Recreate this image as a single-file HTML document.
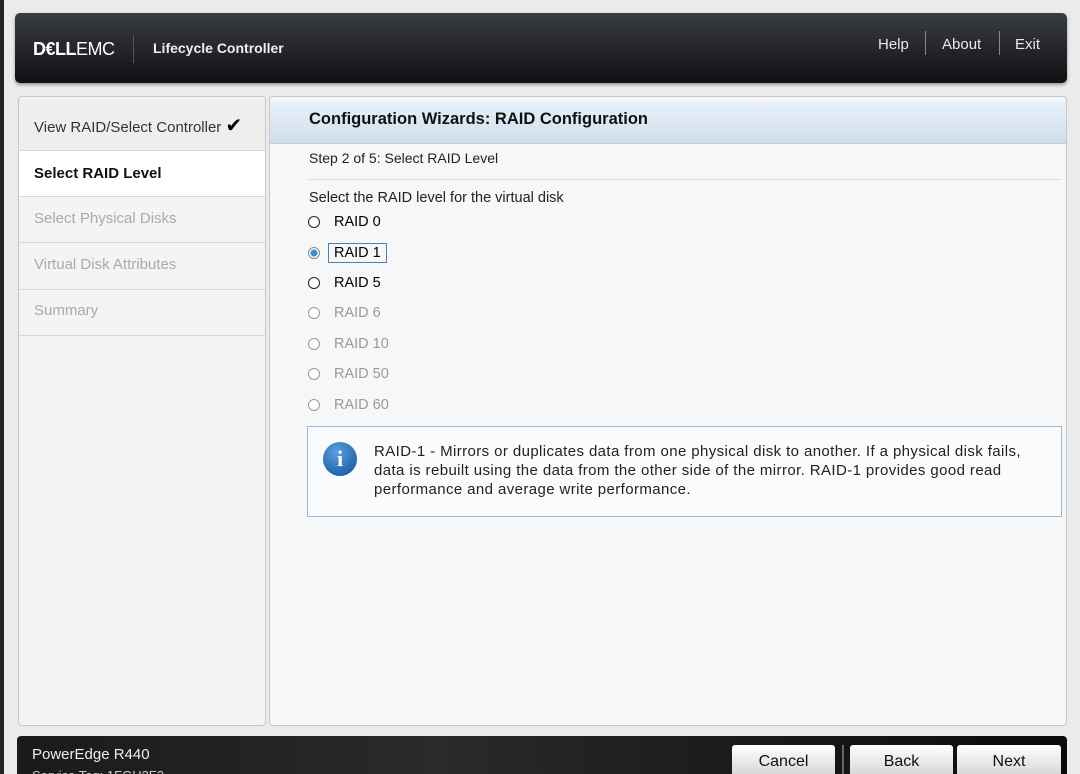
<!DOCTYPE html><html style="overflow:hidden"><head><style>
body{margin:0;width:1080px;height:774px;overflow:hidden;background:#ebebeb;font-family:"Liberation Sans",sans-serif;position:relative}
.a{position:absolute}
.hdr{left:15px;top:13px;width:1052px;height:70px;border-radius:5px;background:linear-gradient(#3a3d42,#0f1012);box-shadow:0 2px 3px #999}
.lp{left:18px;top:96px;width:246px;height:628px;background:#f4f4f4;border:1px solid #c8c8c8;border-radius:4px}
.rp{left:269px;top:96px;width:796px;height:628px;background:#f7f7f7;border:1px solid #c8c8c8;border-radius:4px;overflow:hidden}
.nav{position:absolute;left:0;width:246px;border-bottom:1px solid #d6d6d6;font-size:15px;box-sizing:border-box;padding-left:15px}
.r{position:absolute;left:36px;font-size:14.5px}
.c{position:absolute;left:38px;width:10px;height:10px;border:1px solid #222;border-radius:50%;background:#fff}
.g{color:#999}.g .c{border-color:#999}
.btn{top:745px;height:30px;background:linear-gradient(#fff,#d8d8d8);border-radius:3px 3px 0 0;font-size:16px;text-align:center;line-height:34px;color:#111}
</style></head><body>
<div class="a" style="left:0;top:0;width:4px;height:774px;background:#222"></div>
<div class="a hdr">
<div class="a" style="left:18px;top:26px;color:#fff;font-size:18px;letter-spacing:-0.5px"><b>D€LL</b>EMC</div>
<div class="a" style="left:118px;top:22px;width:1px;height:28px;background:#555"></div>
<div class="a" style="left:138px;top:27px;color:#eee;font-size:14px;font-weight:bold">Lifecycle Controller</div>
<div class="a" style="left:863px;top:23px;color:#e8e8e8;font-size:15px">Help</div>
<div class="a" style="left:910px;top:18px;width:1px;height:24px;background:#888"></div>
<div class="a" style="left:927px;top:23px;color:#e8e8e8;font-size:15px">About</div>
<div class="a" style="left:984px;top:18px;width:1px;height:24px;background:#888"></div>
<div class="a" style="left:1000px;top:23px;color:#e8e8e8;font-size:15px">Exit</div>
</div>
<div class="a lp">
<div class="nav" style="top:3px;height:51px;line-height:52px;background:#eee;color:#333">View RAID/Select Controller <span style="font-size:20px;color:#000">✔</span></div>
<div class="nav" style="top:54px;height:46px;line-height:46px;background:#fff;font-weight:bold;color:#111">Select RAID Level</div>
<div class="nav" style="top:100px;height:46px;line-height:44px;color:#aaa">Select Physical Disks</div>
<div class="nav" style="top:146px;height:47px;line-height:44px;color:#aaa">Virtual Disk Attributes</div>
<div class="nav" style="top:193px;height:46px;line-height:42px;color:#aaa">Summary</div>
</div>
<div class="a rp">
<div class="a" style="left:0;top:3px;width:796px;height:43px;background:linear-gradient(#eaf2fa,#cfdeec);border-bottom:1px solid #c0ccd8"></div>
<div class="a" style="left:39px;top:13px;font-size:16.5px;font-weight:bold;color:#111">Configuration Wizards: RAID Configuration</div>
<div class="a" style="left:39px;top:53px;font-size:14px;color:#222">Step 2 of 5: Select RAID Level</div>
<div class="a" style="left:39px;top:82px;width:752px;height:1px;background:#d8d8d8"></div>
<div class="a" style="left:39px;top:93px;font-size:14.5px;color:#222">Select the RAID level for the virtual disk</div>
<div class="c" style="top:119px"></div><div class="r" style="left:64px;top:117px">RAID 0</div>
<div class="c" style="top:150px;background:radial-gradient(#3d8fd8 45%,#fff 55%);border-color:#888"></div><div class="r" style="left:58px;top:146px;border:1px solid #4a7fb8;padding:1px 5px">RAID 1</div>
<div class="c" style="top:180px"></div><div class="r" style="left:64px;top:178px">RAID 5</div>
<div class="g"><div class="c" style="top:210px"></div><div class="r" style="left:64px;top:208px">RAID 6</div>
<div class="c" style="top:241px"></div><div class="r" style="left:64px;top:239px">RAID 10</div>
<div class="c" style="top:271px"></div><div class="r" style="left:64px;top:269px">RAID 50</div>
<div class="c" style="top:302px"></div><div class="r" style="left:64px;top:300px">RAID 60</div></div>
<div class="a" style="left:37px;top:329px;width:753px;height:89px;border:1px solid #9ab8d8;background:#fafbfc"></div>
<div class="a" style="left:53px;top:345px;width:34px;height:34px;border-radius:50%;background:radial-gradient(circle at 40% 30%,#5aa0e0,#0d4f9a);color:#fff;font:bold 22px 'Liberation Serif',serif;text-align:center;line-height:34px">i</div>
<div class="a" style="left:104px;top:345px;width:665px;font-size:15px;letter-spacing:0.4px;line-height:19px;color:#222">RAID-1 - Mirrors or duplicates data from one physical disk to another. If a physical disk fails,<br>data is rebuilt using the data from the other side of the mirror. RAID-1 provides good read<br>performance and average write performance.</div>
</div>
<div class="a" style="left:17px;top:736px;width:1050px;height:38px;background:linear-gradient(90deg,#1a1a1a,#2a2a2a 40%,#0a0a0a);border-radius:4px 4px 0 0;overflow:hidden"></div>
<div class="a" style="left:32px;top:746px;color:#eee;font-size:15px">PowerEdge R440</div>
<div class="a" style="left:32px;top:768px;color:#ccc;font-size:13px;height:6px;overflow:hidden">Service Tag: 1FGH2F2</div>
<div class="a btn" style="left:732px;width:103px;height:29px">Cancel</div>
<div class="a" style="left:842px;top:745px;width:2px;height:29px;background:#666"></div>
<div class="a btn" style="left:850px;width:103px;height:29px">Back</div>
<div class="a btn" style="left:957px;width:104px;height:29px">Next</div>
</body></html>
